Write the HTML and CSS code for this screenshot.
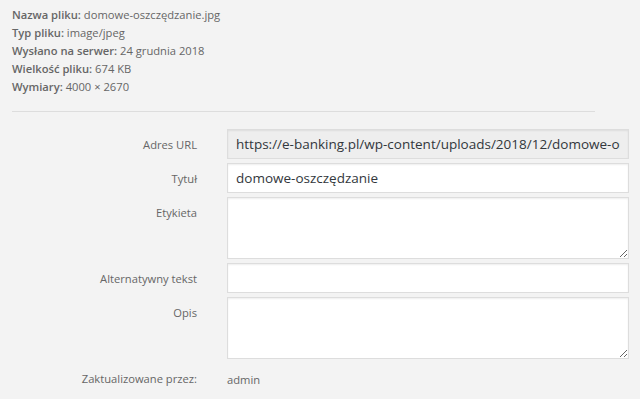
FILE: index.html
```html
<!DOCTYPE html>
<html lang="pl">
<head>
    <meta charset="UTF-8">
    <meta name="viewport" content="width=device-width, initial-scale=1.0">
    <title>Szczegóły załącznika</title>
    <link rel="stylesheet" href="styles.css">
</head>
<body>
    <div class="attachment-info">
        <!-- dane pliku -->
        <div class="details">
            <div class="filename"><strong>Nazwa pliku:</strong> domowe-oszczędzanie.jpg</div>
            <div class="file-type"><strong>Typ pliku:</strong> image/jpeg</div>
            <div class="uploaded"><strong>Wysłano na serwer:</strong> 24 grudnia 2018</div>
            <div class="file-size"><strong>Wielkość pliku:</strong> 674 KB</div>
            <div class="dimensions"><strong>Wymiary:</strong> 4000 × 2670</div>
        </div>

        <div class="divider"></div>

        <!-- pola edycji -->
        <div class="settings">
            <label class="setting">
                <span class="name">Adres URL</span>
                <input type="text" class="field url-field" value="https://e-banking.pl/wp-content/uploads/2018/12/domowe-oszczedzanie.jpg" readonly>
            </label>
            <label class="setting">
                <span class="name">Tytuł</span>
                <input type="text" class="field" value="domowe-oszczędzanie">
            </label>
            <label class="setting">
                <span class="name">Etykieta</span>
                <textarea class="field area"></textarea>
            </label>
            <label class="setting">
                <span class="name">Alternatywny tekst</span>
                <input type="text" class="field" value="">
            </label>
            <label class="setting">
                <span class="name">Opis</span>
                <textarea class="field area"></textarea>
            </label>
            <div class="setting">
                <span class="name">Zaktualizowane przez:</span>
                <span class="value">admin</span>
            </div>
        </div>
    </div>
</body>
</html>
```

FILE: styles.css
```css
body {
    margin: 0;
    background-color: #f3f3f3;
    font-family: "Open Sans", "Noto Sans", sans-serif;
    color: #666;
}

.attachment-info {
    padding: 6px 11px 0 12px;
}

/* dane pliku */
.details {
    font-size: 11.2px;
    line-height: 18px;
}

.details strong {
    font-weight: 600;
}

.divider {
    width: 583px;
    height: 1px;
    margin: 15px 0 17px;
    background-color: #ddd;
}

/* pola edycji */
.settings {
    display: flex;
    flex-direction: column;
    gap: 4px;
}

.setting {
    display: grid;
    grid-template-columns: 185px 402px;
    column-gap: 30px;
    align-items: start;
}

.setting .name,
.setting .value {
    padding-top: 1px;
    font-size: 11.2px;
    line-height: 29px;
}

.setting .name {
    text-align: right;
}

.setting .value {
    padding-top: 2px;
}

.field {
    box-sizing: border-box;
    width: 402px;
    height: 30px;
    margin: 0;
    padding: 0 8px;
    font-family: inherit;
    font-size: 13.5px;
    color: #32373c;
    background-color: #fff;
    border: 1px solid #ddd;
    border-radius: 0;
    box-shadow: inset 0 1px 2px rgba(0, 0, 0, 0.07);
    outline: none;
}

.url-field {
    background-color: #eee;
}

.area {
    display: block;
    height: 62px;
    resize: vertical;
}
```
